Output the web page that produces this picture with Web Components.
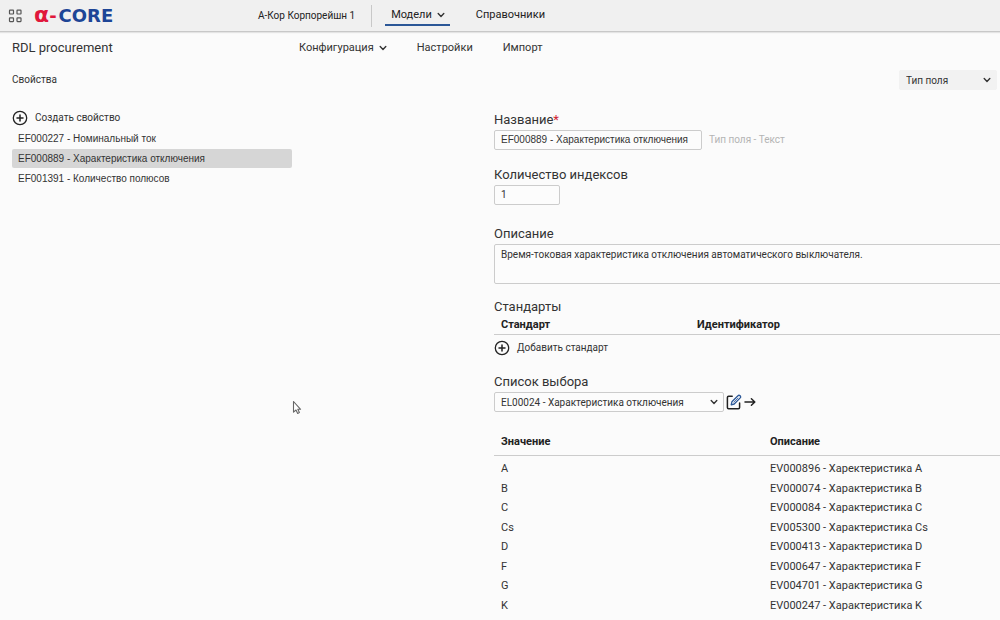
<!DOCTYPE html>
<html lang="ru">
<head>
<meta charset="utf-8">
<title>RDL procurement</title>
<style>
html{height:100%}
body{margin:0;min-height:100%;background:#fbfbfb;color:#333;font:10px/20px Roboto,"Liberation Sans",sans-serif;overflow:hidden}
</style>
</head>
<body>
<rdl-app></rdl-app>
<script>
const define = (name, html, setup) => {
  const t = document.createElement('template');
  t.innerHTML = html;
  customElements.define(name, class extends HTMLElement {
    constructor() {
      super();
      this.attachShadow({mode: 'open'}).append(t.content.cloneNode(true));
    }
    connectedCallback() { if (setup) setup(this, this.shadowRoot); }
  });
};

const icons = {
  grid: ['0 0 14 14', '<g fill="none" stroke="#555" stroke-width="1.2"><rect x="1.5" y="1.2" width="4" height="3.8" rx=".5"/><rect x="9" y="1.2" width="4" height="3.8" rx=".5"/><rect x="1.5" y="8.8" width="4" height="3.8" rx=".5"/><rect x="9" y="8.8" width="4" height="3.8" rx=".5"/></g>'],
  chevron: ['0 0 8 8', '<path d="M1.2 2.6 4 5.4 6.8 2.6" fill="none" stroke="#333" stroke-width="1.4" stroke-linecap="round" stroke-linejoin="round"/>'],
  plus: ['0 0 16 16', '<circle cx="8" cy="8" r="6.7" fill="none" stroke="#222" stroke-width="1.3"/><path d="M8 5v6M5 8h6" stroke="#222" stroke-width="1.5" stroke-linecap="round"/>'],
  edit: ['0 0 16 16', '<path d="M6.2 2.2H2.6Q1.4 2.2 1.4 3.4V13.6Q1.4 14.8 2.6 14.8H12.4Q13.6 14.8 13.6 13.6V9" fill="none" stroke="#222" stroke-width="1.5" stroke-linecap="round"/><path d="M5.2 10.8 5.9 7.8 12 1.7Q13 .8 14.1 1.8 15.1 2.9 14.2 3.9L8.2 10Z" fill="#fff" stroke="#2b5797" stroke-width="1.3" stroke-linejoin="round"/><path d="M7.6 8.4 12.2 3.8" stroke="#2b5797" stroke-width=".8"/>'],
  arrow: ['0 0 12 12', '<path d="M1 6H10.6M7.4 2.8 10.8 6 7.4 9.2" fill="none" stroke="#222" stroke-width="1.5" stroke-linecap="round" stroke-linejoin="round"/>'],
  cursor: ['0 0 10 16', '<path d="M1.5 1.5V12.2L4 10 5.7 13.4 7.4 12.6 5.8 9.3H8.6Z" fill="#fff" stroke="#666" stroke-width="1.1" stroke-linejoin="round"/>']
};
define('ui-icon', '<style>:host{display:block;flex:none;width:16px;height:16px}svg{display:block;width:100%;height:100%}</style><svg aria-hidden="true"></svg>', (el, root) => {
  const [box, body] = icons[el.getAttribute('name')];
  const svg = root.querySelector('svg');
  svg.setAttribute('viewBox', box);
  svg.innerHTML = body;
});

define('brand-logo', `<style>
:host{display:block}
a{display:flex;align-items:baseline;gap:2px;text-decoration:none;font:bold 18px/20px "DejaVu Sans",sans-serif;color:#1d4596;white-space:nowrap}
.alpha{color:#e0183c}.alpha b{font-size:22px;line-height:20px}
</style><a href="#" aria-label="α-CORE"><span class="alpha"><b>α</b>-</span><span>CORE</span></a>`);

define('nav-item', `<style>
:host{display:block;font-size:11px}
a{display:flex;align-items:center;gap:5px;color:inherit;text-decoration:none;white-space:nowrap}
ui-icon{display:none;width:8px;height:8px}
:host([menu]) ui-icon{display:block}
:host([tab]) a{line-height:18px;border-bottom:2px solid transparent}
:host([active]) a{border-color:#2b5797;padding:0 5px 0 6px}
</style><a href="#"><slot></slot><ui-icon name="chevron"></ui-icon></a>`);

define('app-header', `<style>
:host{display:flex;align-items:center;height:31px;background:#f0f0f0;border-bottom:1px solid #c8c8c8;box-shadow:0 1px 1px #e4e4e4;padding-left:8px;color:#222}
button{border:0;background:none;padding:0;margin-right:12px}
button ui-icon{width:14px;height:14px}
.left{display:flex;align-items:center;flex:0 0 250px}
.org{padding-right:16px;margin-right:13px;border-right:1px solid #c8c8c8;line-height:22px}
nav{display:flex;gap:26px}
</style>
<div class="left"><button aria-label="Меню"><ui-icon name="grid"></ui-icon></button><brand-logo></brand-logo></div>
<div class="org">А-Кор Корпорейшн 1</div>
<nav><nav-item tab active menu>Модели</nav-item><nav-item tab>Справочники</nav-item></nav>`);

define('sub-header', `<style>
:host{display:flex;align-items:center;height:32px;padding-left:12px}
h1{flex:0 0 287px;margin:0;font-size:13px;font-weight:400}
nav{display:flex;gap:30px}
</style><h1>RDL procurement</h1><nav><nav-item menu>Конфигурация</nav-item><nav-item>Настройки</nav-item><nav-item>Импорт</nav-item></nav>`);

define('select-box', `<style>
:host{display:block;position:relative}
select{display:block;box-sizing:border-box;width:100%;height:20px;padding:0 20px 0 6px;border:1px solid #ccc;border-radius:2px;background:#fcfcfc;color:inherit;font:inherit;appearance:none}
:host([filled]) select{border-color:#f2f2f2;background:#f2f2f2}
ui-icon{position:absolute;right:6px;top:6px;width:8px;height:8px;pointer-events:none}
</style><select><option></option></select><ui-icon name="chevron"></ui-icon>`, (el, root) => {
  root.querySelector('option').textContent = el.getAttribute('value');
  root.querySelector('select').setAttribute('aria-label', el.getAttribute('label'));
});

define('page-toolbar', `<style>
:host{display:flex;align-items:center;justify-content:space-between;height:32px;padding:0 3px 0 12px}
select-box{width:98px}
</style><span>Свойства</span><select-box filled label="Тип поля" value="Тип поля"></select-box>`);

define('add-button', `<style>
:host{display:block}
button{display:flex;align-items:center;gap:7px;height:20px;padding:0;border:0;background:none;color:inherit;font:inherit}
</style><button><ui-icon name="plus"></ui-icon><slot></slot></button>`);

define('property-list', `<style>
:host{display:block;padding:12px 0 0 12px}
ul{list-style:none;margin:1px 0 0;padding:0;width:280px;font:10px/19px "Liberation Sans",Arial,sans-serif}
li{border-radius:2px}
li+li{margin-top:1px}
li.on{background:#d6d6d6}
a{display:block;padding:0 6px;color:inherit;text-decoration:none;white-space:nowrap}
</style>
<add-button>Создать свойство</add-button>
<ul><li><a href="#">EF000227 - Номинальный ток</a></li><li class="on"><a href="#" aria-current="true">EF000889 - Характеристика отключения</a></li><li><a href="#">EF001391 - Количество полюсов</a></li></ul>`);

define('data-table', `<style>
:host{display:block;font-size:11px}
table{width:100%;border-collapse:collapse;table-layout:fixed}
th{text-align:left;color:#222;font-weight:700;padding:0 7px;height:var(--head,18px);line-height:18px;border-bottom:1px solid #ccc}
th:first-child{width:var(--first)}
tbody::before{content:"";display:block;height:3px}
td{padding:0 7px;height:19px;line-height:19px}
tr:nth-child(even) td{height:20px}
</style><table><thead><tr></tr></thead><tbody></tbody></table>`, (el, root) => {
  const fill = (row, tag, cells) => cells.forEach(c => {
    const n = document.createElement(tag); n.textContent = c; row.append(n);
  });
  fill(root.querySelector('thead tr'), 'th', el.getAttribute('columns').split('|'));
  const rows = el.getAttribute('rows');
  if (!rows) { root.querySelector('tbody').remove(); return; }
  rows.split(';').forEach(r => {
    const tr = document.createElement('tr');
    fill(tr, 'td', r.split('|'));
    root.querySelector('tbody').append(tr);
  });
});

define('property-form', `<style>
:host{display:block;padding-top:15px}
section{margin-bottom:16px}
label,h2{display:block;margin:0 0 1px;font-size:13px;font-weight:400;line-height:18px}
i{font-style:normal;color:#d0202e}
.row{display:flex;align-items:center;gap:7px}
.hint{color:#b4b4b4}
input,textarea{display:block;box-sizing:border-box;height:20px;border:1px solid #ccc;border-radius:2px;background:#fcfcfc;color:inherit;padding:0 6px;font:inherit;margin:0}
#name{width:208px;font-family:"Liberation Sans",Arial,sans-serif}
#count{width:66px}
textarea{width:calc(100% + 8px);height:40px;line-height:20px;resize:none}
.count{margin-bottom:20px}
.about{margin-bottom:14px}
h2.tight{margin:0}
.standards{margin-bottom:15px}
.standards data-table{--first:182px}
add-button{margin-top:3px}
.choice{gap:2px}
.choice select-box{width:230px}
.choice button{padding:0;border:0;background:none}
.arrow ui-icon{width:12px;height:12px}
.values{--first:255px;--head:26px;margin-top:17px}
</style>
<section><label for="name">Название<i>*</i></label><div class="row"><input id="name" value="EF000889 - Характеристика отключения"><span class="hint">Тип поля - Текст</span></div></section>
<section class="count"><label for="count">Количество индексов</label><input id="count" value="1"></section>
<section class="about"><label for="about">Описание</label><textarea id="about">Время-токовая характеристика отключения автоматического выключателя.</textarea></section>
<section class="standards"><h2 class="tight">Стандарты</h2><data-table columns="Стандарт|Идентификатор"></data-table><add-button>Добавить стандарт</add-button></section>
<section><h2>Список выбора</h2><div class="row choice"><select-box label="Список выбора" value="EL00024 - Характеристика отключения"></select-box><button aria-label="Редактировать"><ui-icon name="edit"></ui-icon></button><button class="arrow" aria-label="Перейти"><ui-icon name="arrow"></ui-icon></button></div>
<data-table class="values" columns="Значение|Описание" rows="A|EV000896 - Харектеристика A;B|EV000074 - Характеристика B;C|EV000084 - Характеристика C;Cs|EV005300 - Характеристика Cs;D|EV000413 - Характеристика D;F|EV000647 - Характеристика F;G|EV004701 - Характеристика G;K|EV000247 - Характеристика K"></data-table></section>`);

define('rdl-app', `<style>
:host{display:block;position:relative}
main{display:grid;grid-template-columns:494fr 506fr}
main>*{min-width:0}
.pointer{position:absolute;left:292px;top:400px;width:10px;height:16px}
</style>
<app-header></app-header><sub-header></sub-header><page-toolbar></page-toolbar>
<main><property-list></property-list><property-form></property-form></main>
<ui-icon class="pointer" name="cursor"></ui-icon>`);
</script>
</body>
</html>
